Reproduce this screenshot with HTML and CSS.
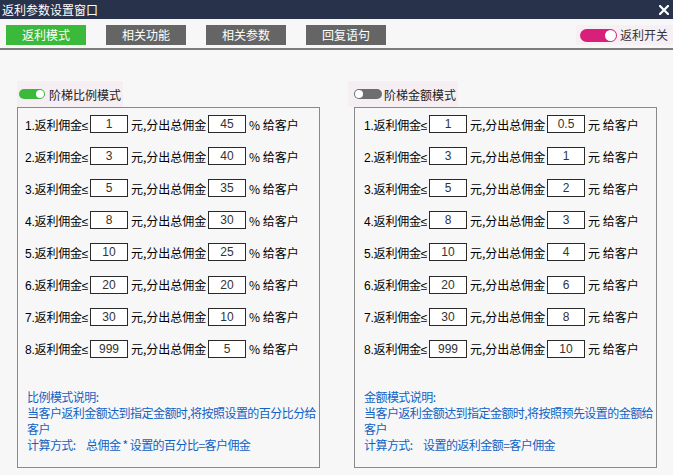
FILE: index.html
```html
<!DOCTYPE html>
<html lang="zh-CN">
<head>
<meta charset="utf-8">
<title>返利参数设置窗口</title>
<link rel="stylesheet" href="styles.css">
</head>
<body>
<div class="window">
  <div class="titlebar">
    <span class="title">返利参数设置窗口</span>
    <svg class="close" width="10" height="10" viewBox="0 0 10 10"><path d="M1 1L9 9M9 1L1 9" stroke="#fff" stroke-width="2.2" stroke-linecap="square"/></svg>
  </div>
  <div class="toolbar">
    <div class="tabs">
      <button class="tab tab-active">返利模式</button>
      <button class="tab">相关功能</button>
      <button class="tab">相关参数</button>
      <button class="tab">回复语句</button>
    </div>
    <div class="master">
      <span class="switch switch-pink"><span class="knob"></span></span>
      <span class="master-label">返利开关</span>
    </div>
  </div>
  <div class="panels">
    <section class="panel panel-left">
      <div class="mode">
        <span class="toggle toggle-on"><span class="dot"></span></span>
        <span class="mode-label">阶梯比例模式</span>
      </div>
      <div class="box">
        <div class="row"><span class="lbl">1.返利佣金≤</span><span class="inp">1</span><span class="mid">元,分出总佣金</span><span class="inp">45</span><span class="suf">% 给客户</span></div>
        <div class="row"><span class="lbl">2.返利佣金≤</span><span class="inp">3</span><span class="mid">元,分出总佣金</span><span class="inp">40</span><span class="suf">% 给客户</span></div>
        <div class="row"><span class="lbl">3.返利佣金≤</span><span class="inp">5</span><span class="mid">元,分出总佣金</span><span class="inp">35</span><span class="suf">% 给客户</span></div>
        <div class="row"><span class="lbl">4.返利佣金≤</span><span class="inp">8</span><span class="mid">元,分出总佣金</span><span class="inp">30</span><span class="suf">% 给客户</span></div>
        <div class="row"><span class="lbl">5.返利佣金≤</span><span class="inp">10</span><span class="mid">元,分出总佣金</span><span class="inp">25</span><span class="suf">% 给客户</span></div>
        <div class="row"><span class="lbl">6.返利佣金≤</span><span class="inp">20</span><span class="mid">元,分出总佣金</span><span class="inp">20</span><span class="suf">% 给客户</span></div>
        <div class="row"><span class="lbl">7.返利佣金≤</span><span class="inp">30</span><span class="mid">元,分出总佣金</span><span class="inp">10</span><span class="suf">% 给客户</span></div>
        <div class="row"><span class="lbl">8.返利佣金≤</span><span class="inp">999</span><span class="mid">元,分出总佣金</span><span class="inp">5</span><span class="suf">% 给客户</span></div>
        <div class="desc">
          <p>比例模式说明:</p>
          <p>当客户返利金额达到指定金额时,将按照设置的百分比分给客户</p>
          <p><span class="calc">计算方式:</span>总佣金 * 设置的百分比=客户佣金</p>
        </div>
      </div>
    </section>
    <section class="panel panel-right">
      <div class="mode">
        <span class="toggle toggle-off"><span class="dot"></span></span>
        <span class="mode-label">阶梯金额模式</span>
      </div>
      <div class="box">
        <div class="row"><span class="lbl">1.返利佣金≤</span><span class="inp">1</span><span class="mid">元,分出总佣金</span><span class="inp">0.5</span><span class="suf">元 给客户</span></div>
        <div class="row"><span class="lbl">2.返利佣金≤</span><span class="inp">3</span><span class="mid">元,分出总佣金</span><span class="inp">1</span><span class="suf">元 给客户</span></div>
        <div class="row"><span class="lbl">3.返利佣金≤</span><span class="inp">5</span><span class="mid">元,分出总佣金</span><span class="inp">2</span><span class="suf">元 给客户</span></div>
        <div class="row"><span class="lbl">4.返利佣金≤</span><span class="inp">8</span><span class="mid">元,分出总佣金</span><span class="inp">3</span><span class="suf">元 给客户</span></div>
        <div class="row"><span class="lbl">5.返利佣金≤</span><span class="inp">10</span><span class="mid">元,分出总佣金</span><span class="inp">4</span><span class="suf">元 给客户</span></div>
        <div class="row"><span class="lbl">6.返利佣金≤</span><span class="inp">20</span><span class="mid">元,分出总佣金</span><span class="inp">6</span><span class="suf">元 给客户</span></div>
        <div class="row"><span class="lbl">7.返利佣金≤</span><span class="inp">30</span><span class="mid">元,分出总佣金</span><span class="inp">8</span><span class="suf">元 给客户</span></div>
        <div class="row"><span class="lbl">8.返利佣金≤</span><span class="inp">999</span><span class="mid">元,分出总佣金</span><span class="inp">10</span><span class="suf">元 给客户</span></div>
        <div class="desc">
          <p>金额模式说明:</p>
          <p>当客户返利金额达到指定金额时,将按照预先设置的金额给客户</p>
          <p><span class="calc">计算方式:</span>设置的返利金额=客户佣金</p>
        </div>
      </div>
    </section>
  </div>
</div>
</body>
</html>
```
FILE: styles.css
```css
* { box-sizing: border-box; }
html, body { margin: 0; padding: 0; }
body {
  width: 673px;
  height: 475px;
  overflow: hidden;
  background: #f7f7f7;
  font-family: "Noto Sans CJK SC", "Liberation Sans", sans-serif;
  font-size: 12px;
  color: #000;
}
.titlebar {
  height: 19px;
  background: #28324a;
  display: flex;
  align-items: center;
  justify-content: space-between;
  padding: 0 4px 0 2px;
}
.title {
  color: #fff;
  font-size: 12px;
  line-height: 19px;
}
.close { display: block; margin-right: 0; }
.toolbar {
  height: 31px;
  display: flex;
  align-items: flex-start;
  justify-content: space-between;
  padding: 6px 0 0 6px;
  border-bottom: 2px solid #7d7d7d;
}
.tabs { display: flex; gap: 20px; }
.tab {
  width: 80px;
  height: 20px;
  border: 0;
  padding: 0;
  margin: 0;
  background: #656565;
  color: #fff;
  font-family: "Noto Sans CJK SC", sans-serif;
  font-size: 12px;
  line-height: 20px;
}
.tab-active { background: #3bb93a; }
.master {
  display: flex;
  align-items: center;
  gap: 3px;
  height: 20px;
  padding: 0 5px 0 4px;
  background: #f6eff3;
}
.switch {
  width: 37px;
  height: 13px;
  border-radius: 7px;
  display: flex;
  align-items: center;
  justify-content: flex-end;
  padding: 0 1px;
}
.switch-pink { background: #d8207b; }
.knob {
  width: 11px;
  height: 11px;
  border-radius: 50%;
  background: #fff;
}
.master-label { color: #333; font-size: 12px; line-height: 20px; }
.panels {
  display: flex;
  gap: 34px;
  padding: 31px 0 0 17px;
}
.panel { width: 303px; display: flex; flex-direction: column; }
.mode {
  align-self: flex-start;
  display: flex;
  align-items: center;
  height: 26px;
  gap: 4px;
  padding: 0 2px 0 2px;
  background: #f5eef2;
}
.panel-right .mode { margin-left: -6px; padding-left: 6px; gap: 2px; }
.toggle {
  width: 26px;
  height: 10px;
  border-radius: 5px;
  display: flex;
  align-items: center;
  padding: 0 1px;
}
.toggle-on { background: #3cb93a; justify-content: flex-end; }
.toggle-off { background: #6e6e6e; justify-content: flex-start; width: 28px; }
.dot {
  width: 8px;
  height: 8px;
  border-radius: 50%;
  background: #fff;
}
.mode-label { color: #222; font-size: 12px; }
.box {
  border: 1px solid #8a8a8a;
  height: 361px;
  padding: 0 0 0 7px;
}
.panel-right .box { padding-left: 9px; }
.row {
  display: grid;
  grid-template-columns: 65px 38px 80px 38px auto;
  align-items: center;
  height: 32.1px;
  white-space: nowrap;
}
.lbl {
  font-family: "Liberation Sans", "Noto Sans CJK SC", sans-serif;
  letter-spacing: -0.2px;
}
.mid { padding-left: 3px; }
.suf { padding-left: 3px; }
.inp {
  height: 18px;
  border: 1px solid #2a2a2a;
  background: #fff;
  text-align: center;
  font-family: "Liberation Sans", sans-serif;
  font-size: 12px;
  line-height: 16px;
  color: #333;
}
.desc {
  margin-top: 24px;
  padding-left: 2px;
  color: #0f62c4;
  font-size: 12px;
  line-height: 16px;
  letter-spacing: -0.55px;
  width: 292px;
}
.panel-right .desc { padding-left: 0; }
.desc p { margin: 0; }
.calc { display: inline-block; width: 59px; }
.panel-right .calc { width: 59px; }
```
